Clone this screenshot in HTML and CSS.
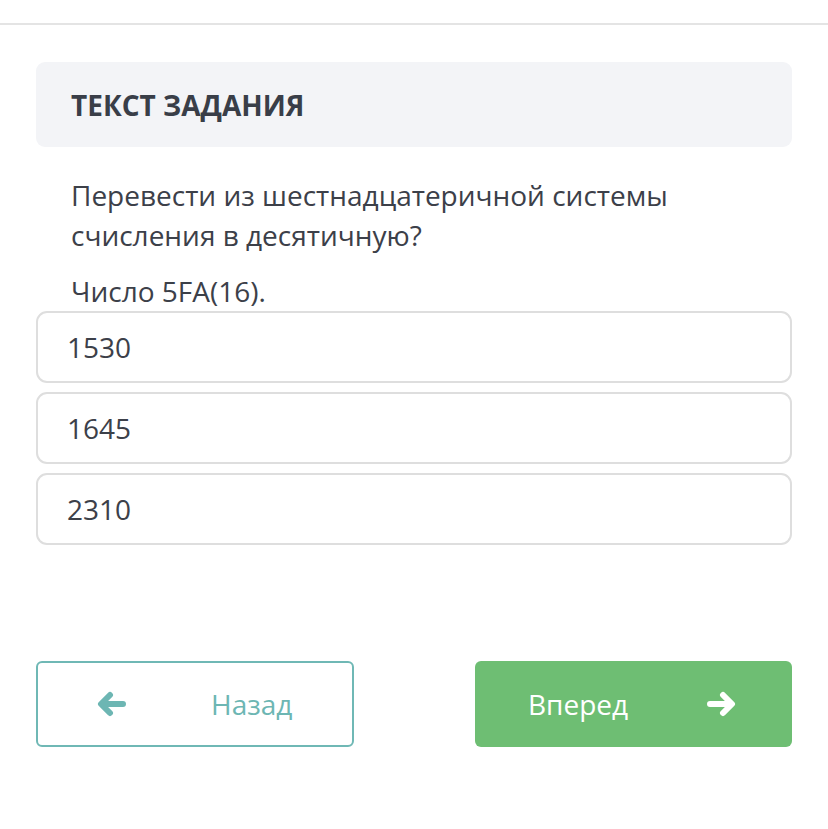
FILE: index.html
```html
<!DOCTYPE html>
<html lang="ru">
<head>
<meta charset="utf-8">
<link rel="stylesheet" href="styles.css">
</head>
<body>
<div class="topline"></div>
<main class="page">
  <div class="header-box"><h2 class="title">ТЕКСТ ЗАДАНИЯ</h2></div>
  <div class="question">
    <p class="q-text">Перевести из шестнадцатеричной системы счисления в десятичную?</p>
    <p class="q-num">Число 5FA(16).</p>
  </div>
  <div class="options">
    <div class="option">1530</div>
    <div class="option">1645</div>
    <div class="option">2310</div>
  </div>
  <div class="nav">
    <button class="btn btn-back">
      <svg class="arrow" width="30" height="26" viewBox="0 0 30 26"><path d="M27 13H6M14 4L5 13L14 22" fill="none" stroke="currentColor" stroke-width="6" stroke-linecap="round" stroke-linejoin="round"/></svg>
      <span>Назад</span>
    </button>
    <button class="btn btn-next">
      <span>Вперед</span>
      <svg class="arrow" width="30" height="26" viewBox="0 0 30 26"><path d="M3 13H24M16 4L25 13L16 22" fill="none" stroke="currentColor" stroke-width="6" stroke-linecap="round" stroke-linejoin="round"/></svg>
    </button>
  </div>
</main>
</body>
</html>
```
FILE: styles.css
```css
* { box-sizing: border-box; }
html, body { margin: 0; padding: 0; background: #fff; }
body { font-family: "Open Sans", "Liberation Sans", sans-serif; color: #3c4049; }
.topline { margin-top: 23px; height: 2px; background: #e4e4e4; }
.page { padding: 37px 36px 0 36px; }
.header-box {
  background: #f3f4f7;
  border-radius: 9px;
  height: 85px;
  display: flex;
  align-items: center;
  padding-left: 35px;
}
.title { margin: 0; font-size: 28px; font-weight: 700; color: #393e48; letter-spacing: 0; }
.question { padding: 28px 35px 0 35px; }
.q-text { margin: 0; font-size: 28px; line-height: 40px; }
.q-num { margin: 18px 0 0 0; font-size: 28px; line-height: 36px; }
.options { display: flex; flex-direction: column; gap: 9px; margin-top: 2px; }
.option {
  height: 72px;
  border: 2px solid #dedede;
  border-radius: 11px;
  display: flex;
  align-items: center;
  padding-left: 29px;
  font-size: 28px;
  color: #3c4049;
}
.nav { display: flex; justify-content: space-between; margin-top: 116px; }
.btn {
  width: 318px;
  height: 86px;
  border-radius: 6px;
  font-family: inherit;
  font-size: 28px;
  display: flex;
  align-items: center;
  cursor: pointer;
}
.btn-back {
  background: #fff;
  border: 2px solid #6fb8b5;
  color: #6db6b3;
  padding: 0 0 0 58px;
}
.btn-back span { margin-left: 85px; }
.btn-next {
  width: 317px;
  background: #6ebe73;
  border: none;
  color: #fff;
  padding: 0 0 0 53px;
}
.btn-next .arrow { margin-left: 79px; }
```
